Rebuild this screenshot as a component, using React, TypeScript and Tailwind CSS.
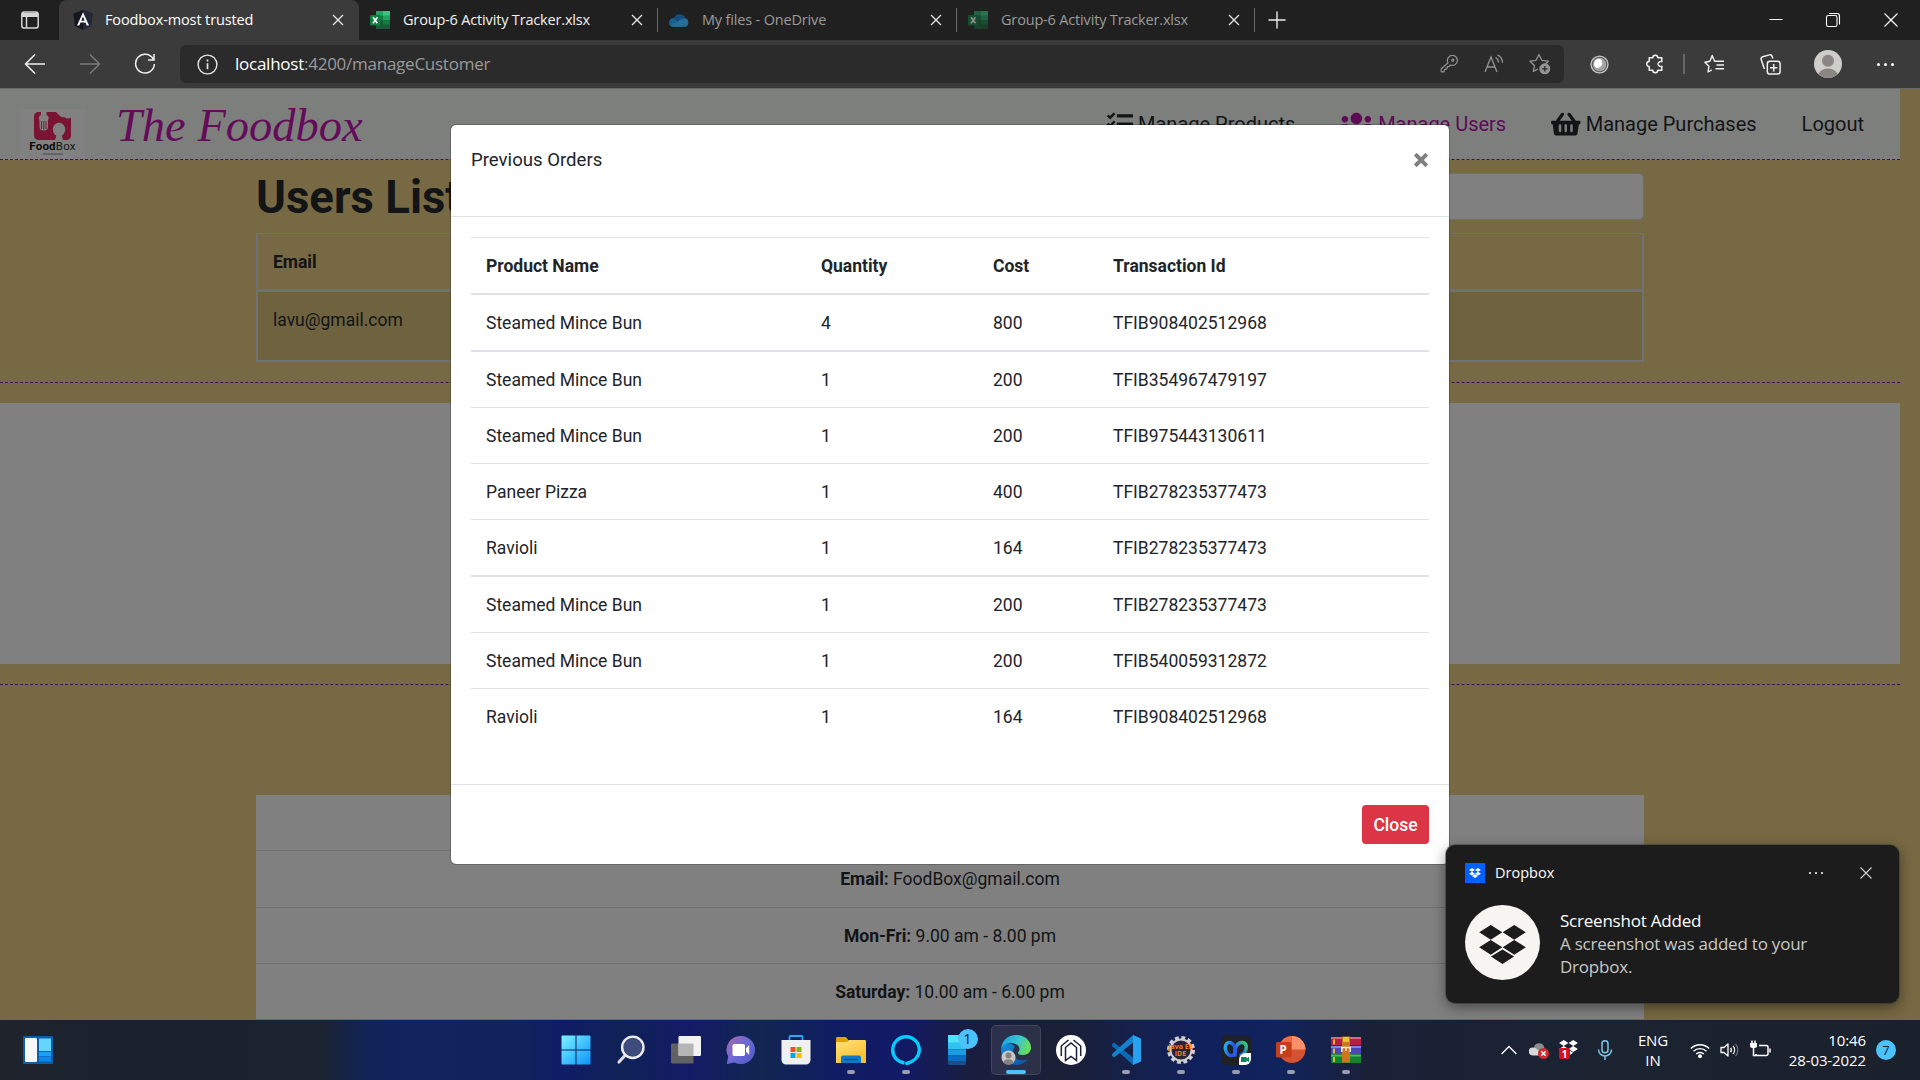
import type { ReactNode } from "react";
import { FaShoppingBasket, FaTasks, FaUsers } from "react-icons/fa";

type Order = { name: string; qty: number; cost: number; id: string; row: string };

const orders: Order[] = [
  { name: "Steamed Mince Bun", qty: 4, cost: 800, id: "TFIB908402512968", row: "h-[57px] border-b-2" },
  { name: "Steamed Mince Bun", qty: 1, cost: 200, id: "TFIB354967479197", row: "h-14 border-b" },
  { name: "Steamed Mince Bun", qty: 1, cost: 200, id: "TFIB975443130611", row: "h-14 border-b" },
  { name: "Paneer Pizza", qty: 1, cost: 400, id: "TFIB278235377473", row: "h-14 border-b" },
  { name: "Ravioli", qty: 1, cost: 164, id: "TFIB278235377473", row: "h-[57px] border-b-2" },
  { name: "Steamed Mince Bun", qty: 1, cost: 200, id: "TFIB278235377473", row: "h-14 border-b" },
  { name: "Steamed Mince Bun", qty: 1, cost: 200, id: "TFIB540059312872", row: "h-14 border-b" },
  { name: "Ravioli", qty: 1, cost: 164, id: "TFIB908402512968", row: "h-[55px]" },
];

const orderCols = "grid grid-cols-[335px_172px_120px_1fr] items-center pt-0.5";

/* ---------- browser chrome ---------- */

function TabClose() {
  return (
    <svg className="size-[14px] shrink-0 text-[#e8e8e8]" viewBox="0 0 14 14" fill="none" stroke="currentColor" strokeWidth="1.3">
      <path d="M2 2l10 10M12 2L2 12" />
    </svg>
  );
}

function AngularIcon() {
  return (
    <svg className="size-5 shrink-0" viewBox="0 0 20 20">
      <path d="M10 0l9.5 3.4-1.4 12.4L10 20l-8.1-4.2L.5 3.4z" fill="#14161f" />
      <path d="M10 0v20l8.1-4.2L19.5 3.4z" fill="#232738" />
      <path d="M10 2.2L4 15.6h2.3l1.2-3h5l1.2 3H16zm0 4.3l1.7 4.2H8.3z" fill="#fff" />
    </svg>
  );
}

function ExcelIcon({ dim = false }: { dim?: boolean }) {
  return (
    <svg className={dim ? "size-5 shrink-0 opacity-50" : "size-5 shrink-0"} viewBox="0 0 20 20">
      <path d="M6 1h14v18H6z" fill="#21a366" />
      <path d="M13 1h7v4.5h-7z" fill="#33c481" />
      <path d="M6 5.5h7V10H6z" fill="#107c41" />
      <path d="M6 10h14v9H6z" fill="#185c37" />
      <path d="M13 10h7v4.5h-7z" fill="#107c41" />
      <rect y="5" width="10.5" height="10.5" rx="1" fill="#107c41" />
      <path d="M3 7.2l4.4 6M7.4 7.2L3 13.2" stroke="#fff" strokeWidth="1.6" />
    </svg>
  );
}

function OneDriveIcon() {
  return (
    <svg className="size-5 shrink-0" viewBox="0 0 20 20">
      <path d="M5 8.2A6 6 0 0 1 16 7.5l-6 4.5z" fill="#14507f" />
      <path d="M0 12.6A4.6 4.6 0 0 1 5 8l9 8.8H4A4.2 4.2 0 0 1 0 12.6z" fill="#1a6092" />
      <path d="M15.5 8a4.5 4.5 0 0 1 .5 8.8H4a4 4 0 0 1-2.6-1.2L12 9.5z" fill="#256f98" />
    </svg>
  );
}

function Tab({ width, icon, title, dim }: { width: string; icon: ReactNode; title: string; dim?: boolean }) {
  return (
    <div className={`flex h-full items-center pr-[13px] pl-[11px] ${width}`}>
      {icon}
      <span className={`ml-[13px] flex-1 text-[14.5px] tracking-[-0.17px] whitespace-nowrap ${dim ? "text-[#9b9b9b]" : "text-[#f2f2f2]"}`}>{title}</span>
      <TabClose />
    </div>
  );
}

function TabBar() {
  return (
    <div className="flex h-10 items-center bg-[#202020]">
      <div className="flex h-full w-[59px] items-center justify-center">
        <svg className="size-5" viewBox="0 0 20 20" fill="none" stroke="#d6d6d6" strokeWidth="1.5">
          <rect x="1.8" y="2" width="16.4" height="16" rx="2.6" />
          <path d="M2 5h16" strokeWidth="4" />
          <path d="M6.5 6v12" />
        </svg>
      </div>
      <div className="flex h-full w-[300px] items-center rounded-t-lg bg-[#3b3b3b] pr-[14px] pl-[14px]">
        <AngularIcon />
        <span className="ml-3 flex-1 text-[14.5px] tracking-[-0.12px] text-white">Foodbox-most trusted</span>
        <TabClose />
      </div>
      <Tab width="w-[298px]" icon={<ExcelIcon />} title="Group-6 Activity Tracker.xlsx" />
      <div className="h-6 w-px bg-[#6b6b6b]" />
      <Tab width="w-[298px]" icon={<OneDriveIcon />} title="My files - OneDrive" dim />
      <div className="h-6 w-px bg-[#6b6b6b]" />
      <Tab width="w-[297px]" icon={<ExcelIcon dim />} title="Group-6 Activity Tracker.xlsx" dim />
      <div className="h-6 w-px bg-[#6b6b6b]" />
      <svg className="ml-[13px] size-[18px]" viewBox="0 0 18 18" stroke="#ededed" strokeWidth="1.4">
        <path d="M9 .5v17M.5 9h17" />
      </svg>
      <div className="ml-auto flex">
        <div className="flex w-[57px] justify-center">
          <svg className="size-4" viewBox="0 0 16 16" stroke="#fff"><path d="M1.5 7.5h13" /></svg>
        </div>
        <div className="flex w-[58px] justify-center">
          <svg className="size-4" viewBox="0 0 16 16" fill="none" stroke="#fff" strokeWidth="1.1">
            <rect x="1.5" y="3.5" width="10.5" height="11" rx="1.8" />
            <path d="M4 1.5h8a2.5 2.5 0 0 1 2.5 2.5v8.5" />
          </svg>
        </div>
        <div className="flex w-[58px] justify-center">
          <svg className="size-4" viewBox="0 0 16 16" stroke="#fff" strokeWidth="1.2"><path d="M1.5 1.5l13 13M14.5 1.5l-13 13" /></svg>
        </div>
      </div>
    </div>
  );
}

function ToolBar() {
  return (
    <div className="flex h-[49px] items-center border-b border-[#6a6a6a] bg-[#3b3b3b]">
      <div className="flex w-[180px] justify-between pr-[24px] pl-[24px]">
        <svg className="size-[22px]" viewBox="0 0 22 22" fill="none" stroke="#f0f0f0" strokeWidth="1.5"><path d="M21 11H2M11 1.5L1.5 11l9.5 9.5" /></svg>
        <svg className="size-[22px]" viewBox="0 0 22 22" fill="none" stroke="#7b7b7b" strokeWidth="1.5"><path d="M1 11h19M11 1.5l9.5 9.5-9.5 9.5" /></svg>
        <svg className="size-[22px]" viewBox="0 0 22 22" fill="none" stroke="#f0f0f0" strokeWidth="1.5">
          <path d="M19.3 6.2A9.4 9.4 0 1 0 20.4 11M20 1v6h-6" />
        </svg>
      </div>
      <div className="flex h-[38px] w-[1384px] items-center rounded-md bg-[#2b2b2b] pr-[13px] pl-[17px]">
        <svg className="size-[21px]" viewBox="0 0 21 21" fill="none" stroke="#e6e6e6" strokeWidth="1.4">
          <circle cx="10.5" cy="10.5" r="9.4" />
          <path d="M10.5 9.2v6M10.5 5.6v2" strokeWidth="1.7" />
        </svg>
        <div className="ml-[17px] flex-1 text-[17px] tracking-[-0.25px] text-[#9a9a9a]">
          <span className="text-white">localhost</span>:4200/manageCustomer
        </div>
        <svg className="size-[18px]" viewBox="0 0 18 18" fill="none" stroke="#949494" strokeWidth="1.2">
          <path d="M8 7.7A5 5 0 1 1 10.500 10L9 11.500H7.500V13H6v1.500H4.600L4 16.800H1.200V14z" strokeLinejoin="round" />
          <circle cx="12.8" cy="5.2" r="1" />
        </svg>
        <svg className="ml-[26px] size-5" viewBox="0 0 20 20" fill="none" stroke="#949494" strokeWidth="1.3">
          <path d="M1 18L7 3l6 15M3.2 13h7.6" />
          <path d="M11.5 3.5a6 6 0 0 1 3 5M13.5.8a9 9 0 0 1 5 8" />
        </svg>
        <svg className="ml-[25px] size-[22px]" viewBox="0 0 22 22" fill="none" stroke="#949494" strokeWidth="1.3" strokeLinejoin="round">
          <path d="M9 16l-4.6 2.5 1-6L1 8.2l6-.9L10 1.500l2.8 5.800 6.500.900-3 3" />
          <circle cx="15.8" cy="15.8" r="5.5" fill="#949494" stroke="none" />
          <path d="M15.8 13v5.6M13 15.8h5.6" stroke="#2b2b2b" />
        </svg>
      </div>
      <div className="ml-[7px] flex w-14 justify-center">
        <svg className="size-[19px]" viewBox="0 0 20 20">
          <circle cx="10" cy="10" r="9.6" fill="#c4c4c4" />
          <circle cx="10" cy="10" r="8.2" fill="#5c5c5c" />
          <circle cx="10" cy="10" r="7" fill="#a4a4a4" />
          <ellipse cx="8.600" cy="8.800" rx="4.200" ry="5" fill="#fff" transform="rotate(25 8.6 8.8)" />
        </svg>
      </div>
      <div className="flex w-14 justify-center">
        <svg className="size-5" viewBox="0 0 20 20" fill="none" stroke="#f0f0f0" strokeWidth="1.5" strokeLinejoin="round">
          <path d="M4.2 3.8h3.600a2.500 2.500 0 1 1 5 0h4v4a2.500 2.500 0 1 0 0 4.400v4h-4a2.500 2.500 0 1 1-5 0H4.200v-3.700a2.500 2.500 0 1 1 0-5z" />
        </svg>
      </div>
      <div className="h-5 w-0.5 bg-[#686868]" />
      <div className="flex w-[58px] justify-center">
        <svg className="size-5" viewBox="0 0 20 20" fill="none" stroke="#f0f0f0" strokeWidth="1.4" strokeLinejoin="round">
          <path d="M7.8 15.8l-3.8 2.2.9-5.7L.9 8.2l5-.9L8.200 1.500l2.400 5.800H20M12.500 11H20M11.500 14.800H20" />
        </svg>
      </div>
      <div className="flex w-[55px] justify-center">
        <svg className="size-[21px]" viewBox="0 0 21 21" fill="none" stroke="#f0f0f0" strokeWidth="1.5">
          <rect x="7.3" y="7.3" width="12.8" height="12.8" rx="2.6" />
          <path d="M13.7 10v7.4M10 13.7h7.4M4.4 15L1.2 5.6a2.300 2.300 0 0 1 1.500-2.800L9.400.9a2.300 2.300 0 0 1 2.800 1.600l.6 2" />
        </svg>
      </div>
      <div className="flex w-[59px] justify-center">
        <div className="flex size-7 justify-center overflow-hidden rounded-full bg-[#cfcdca]">
          <svg viewBox="0 0 28 28" fill="#8b8683"><circle cx="14" cy="10.7" r="6" /><ellipse cx="14" cy="26" rx="10" ry="7.5" /></svg>
        </div>
      </div>
      <div className="flex w-[56px] justify-center gap-1">
        <i className="size-[3px] rounded-full bg-white" />
        <i className="size-[3px] rounded-full bg-white" />
        <i className="size-[3px] rounded-full bg-white" />
      </div>
    </div>
  );
}

/* ---------- page ---------- */

function FoodboxLogo() {
  return (
    <div className="flex h-[50px] w-[65px] flex-col items-center bg-[#818181] pt-[3px]">
      <svg className="h-7 w-[37px] shrink-0" viewBox="0 0 37 28">
        <rect width="37" height="28" rx="4.5" fill="#7a1433" />
        <g fill="#818181">
          <path d="M22 0h15v5.500c-2.500 1.800-5 1-7-.5-3 1-5-2-8-5z" />
          <path d="M7 0h5.500v3c2.500 1 2.500 3 1.500 5.500v6c0 3-1.500 4-4.200 4S5.500 17.500 5.500 14.500v-6C4.500 6 4.500 4 7 3z" />
          <ellipse cx="25" cy="17.500" rx="6.200" ry="6.700" />
          <path d="M22.800 22h4.600l1.600 6h-8z" />
        </g>
        <path d="M7.600 9v8M9.800 9v8.500M12 9v8" stroke="#7a1433" strokeWidth=".9" />
      </svg>
      <div className="text-[11.5px] leading-[13px] tracking-[0.2px] text-[#151515]"><b className="text-[#0c0c0c]">Food</b>Box</div>
      <div className="h-[2px] w-5 bg-[#646464]" />
    </div>
  );
}

function NavBar() {
  return (
    <header className="flex h-[71px] items-center border-b border-dashed border-[#400e60] bg-[#7d7f7d] pr-[36px] pl-5 text-xl text-[#121416]">
      <div className="flex h-full items-end"><FoodboxLogo /></div>
      <div className="mt-[5px] ml-[31px] font-['Liberation_Serif',serif] text-[46.5px] leading-none text-[#640c5a] italic">The Foodbox</div>
      <nav className="ml-auto flex items-center gap-[45px]">
        <a className="flex items-center gap-[5px]"><FaTasks className="text-[26.25px]" />Manage Products</a>
        <a className="flex items-center gap-[5px] text-[#5e0a55]"><FaUsers className="h-[26.25px] w-[32.8px]" />Manage Users</a>
        <a className="flex items-center gap-[5px]"><FaShoppingBasket className="h-[26.25px] w-[29.5px]" />Manage Purchases</a>
        <a>Logout</a>
      </nav>
    </header>
  );
}

function Page() {
  return (
    <main className="h-[931px] overflow-hidden bg-[#776943] pr-5 text-[#121416]">
      <NavBar />
      <section className="h-[223px] border-b border-dashed border-[#400e60] px-64">
        <div className="flex h-[73px] items-start justify-between">
          <h1 className="mt-[10px] text-[45.5px] leading-[56px] font-bold">Users List</h1>
          <div className="mt-[13px] h-[47px] w-[400px] rounded-[5px] border border-[#6b7074] bg-[#808080]" />
        </div>
        <div className="h-[129px] border-2 border-t border-[#6f7173]">
          <div className="flex h-[58px] items-center border-b-3 border-[#6f7173] pt-0.5 pl-[15px] font-bold">Email</div>
          <div className="h-[68px] bg-[#6f623f] pt-[15px] pl-[15px] leading-[26px]">lavu@gmail.com</div>
        </div>
      </section>
      <div className="mt-5 h-[261px] bg-[#808080]" />
      <div className="h-[21px] border-b border-dashed border-[#400e60]" />
      <section className="mx-64 mt-[110px] bg-[#808080] text-center">
        <div className="h-14 border-b border-[#707070]" />
        <div className="h-[57px] border-b border-[#707070] leading-[56px]"><b>Email:</b> FoodBox@gmail.com</div>
        <div className="h-14 border-b border-[#707070] leading-[56px]"><b>Mon-Fri:</b> 9.00 am - 8.00 pm</div>
        <div className="h-[55px] leading-[56px]"><b>Saturday:</b> 10.00 am - 6.00 pm</div>
      </section>
    </main>
  );
}

function OrdersDialog() {
  return (
    <div className="absolute top-[124px] left-[450px] flex h-[741px] w-[1000px] flex-col rounded-md border border-black/20 bg-white bg-clip-padding text-[#212529]">
      <div className="flex h-[92px] items-start justify-between border-b border-[#dee2e6] px-5 pt-[21px]">
        <h5 className="text-[18.6px] leading-7">Previous Orders</h5>
        <svg className="mt-[7px] mr-[1px] size-[14px]" viewBox="0 0 14 14" stroke="#7f7f7f" strokeWidth="4"><path d="M1.2 1.2l11.6 11.6M12.8 1.2L1.2 12.8" /></svg>
      </div>
      <div className="flex-1 px-5 pt-5">
        <div className={`h-[58px] border-t border-b-2 border-[#dee2e6] font-bold *:pl-[15px] ${orderCols}`}>
          <span>Product Name</span><span>Quantity</span><span>Cost</span><span>Transaction Id</span>
        </div>
        {orders.map((o, i) => (
          <div key={i} className={`border-[#dee2e6] *:pl-[15px] ${orderCols} ${o.row}`}>
            <span>{o.name}</span><span>{o.qty}</span><span>{o.cost}</span><span>{o.id}</span>
          </div>
        ))}
      </div>
      <div className="flex h-20 items-start justify-end border-t border-[#dee2e6] px-5 pt-5">
        <button className="h-[39px] w-[67px] rounded bg-[#dc3545] pt-0.5 font-medium text-white">Close</button>
      </div>
    </div>
  );
}

/* ---------- notification ---------- */

function DropboxGlyph({ className, fill }: { className: string; fill: string }) {
  return (
    <svg className={className} viewBox="0 0 48 40" fill={fill}>
      <path d="M12 0l11.8 7.5L12 15 .2 7.5zM36 0l11.8 7.5L36 15 24.2 7.5zM12 15.3l11.8 7.5L12 30.3.2 22.8zM36 15.3l11.8 7.5L36 30.3l-11.8-7.5zM24 25l11.8 7.3L24 39.8l-11.8-7.5z" />
    </svg>
  );
}

function Toast() {
  return (
    <div className="absolute top-[845px] left-[1446px] h-[158px] w-[453px] rounded-[9px] bg-[#1c1c1c] px-[19px] pt-[18px] font-['Open_Sans',sans-serif] shadow-[0_4px_14px_rgba(0,0,0,0.45),0_0_0_1px_rgba(70,70,70,0.5)]">
      <div className="flex h-5 items-center">
        <div className="flex size-5 items-center justify-center bg-[#0061fe]"><DropboxGlyph className="w-3" fill="#fff" /></div>
        <span className="ml-[10px] flex-1 text-[14.5px] text-white">Dropbox</span>
        <div className="flex gap-1">
          <i className="size-[2px] bg-[#c8c8c8]" /><i className="size-[2px] bg-[#c8c8c8]" /><i className="size-[2px] bg-[#c8c8c8]" />
        </div>
        <svg className="mr-[8px] ml-[37px] size-3" viewBox="0 0 12 12" stroke="#d0d0d0" strokeWidth="1.1"><path d="M.5.5l11 11M11.5.5l-11 11" /></svg>
      </div>
      <div className="mt-[22px] flex">
        <div className="flex size-[75px] items-center justify-center rounded-full bg-[#f7f5f2]"><DropboxGlyph className="mt-1 w-[47px]" fill="#1c1c1c" /></div>
        <div className="ml-5 pt-1 text-[17px] leading-[23px] tracking-[-0.22px] text-[#c8c8c8]">
          <div className="text-white">Screenshot Added</div>
          <div>A screenshot was added to your<br />Dropbox.</div>
        </div>
      </div>
    </div>
  );
}

/* ---------- taskbar ---------- */

function TaskItem({ children, state }: { children: ReactNode; state?: "open" | "active" }) {
  return (
    <div className="relative flex h-[60px] w-[55px] items-center justify-center">
      {state === "active" && <div className="absolute top-[5px] left-[3px] h-[50px] w-[50px] rounded-[5px] border border-white/10 bg-white/8" />}
      <div className="relative size-[30px]">{children}</div>
      {state === "active" && <div className="absolute bottom-[6px] left-[18px] h-1 w-5 rounded-full bg-[#4cc2ff]" />}
      {state === "open" && <div className="absolute bottom-[6px] left-[24px] h-1 w-2 rounded-full bg-[#9a9db0]" />}
    </div>
  );
}

function TaskIcons() {
  return (
    <div className="flex">
      <TaskItem>
        <svg viewBox="0 0 30 30">
          <defs><linearGradient id="win" gradientUnits="userSpaceOnUse" x1="0" y1="0" x2="30" y2="30"><stop stopColor="#7df4ff" /><stop offset="1" stopColor="#0a93ff" /></linearGradient></defs>
          <path d="M.5 1.5A1 1 0 0 1 1.5.5h13v14H.5zM15.5.5h13a1 1 0 0 1 1 1v13h-14zM.5 15.5h14v14h-13a1 1 0 0 1-1-1zM15.5 15.5h14v13a1 1 0 0 1-1 1h-13z" fill="url(#win)" />
        </svg>
      </TaskItem>
      <TaskItem>
        <svg viewBox="0 0 30 30">
          <path d="M9 20.500L3 27" stroke="#dcdcdc" strokeWidth="3.2" strokeLinecap="round" />
          <circle cx="16.8" cy="12.3" r="10.7" fill="#3f4a7d" stroke="#ececec" strokeWidth="2.4" />
        </svg>
      </TaskItem>
      <TaskItem>
        <svg viewBox="0 0 30 30">
          <rect x="0" y="8.5" width="22.5" height="20" rx="1.2" fill="#616161" />
          <rect x="7.5" y="1" width="22.5" height="20" rx="1.2" fill="#f2f2f2" />
          <path d="M7.5 8.5h15V21H8.7a1.2 1.2 0 0 1-1.2-1.2z" fill="#b5b5b5" />
        </svg>
      </TaskItem>
      <TaskItem>
        <svg viewBox="0 0 30 30">
          <defs><linearGradient id="chat" x1="0" y1="0" x2="1" y2=".9"><stop stopColor="#b067a0" /><stop offset=".5" stopColor="#6a6ad8" /><stop offset="1" stopColor="#5558c8" /></linearGradient></defs>
          <path d="M15 1a14 14 0 1 1-6.5 26.4L.8 29l1.4-7.4A14 14 0 0 1 15 1z" fill="url(#chat)" />
          <rect x="6.5" y="9" width="12.5" height="12" rx="1.8" fill="#fff" />
          <path d="M20 13.2l3.2-3v9.6l-3.2-3z" fill="#fff" />
        </svg>
      </TaskItem>
      <TaskItem>
        <svg viewBox="0 0 30 30">
          <path d="M8.5 6V2a1 1 0 0 1 1-1h11a1 1 0 0 1 1 1v4" fill="none" stroke="#2ba8f5" strokeWidth="1.8" />
          <path d="M.5 5h29v20a4.5 4.5 0 0 1-4.5 4.5H5A4.5 4.5 0 0 1 .5 25z" fill="#f0f0f0" />
          <path d="M9.5 12h5v5h-5z" fill="#f25022" /><path d="M15.5 12h5v5h-5z" fill="#7fba00" />
          <path d="M9.5 18h5v5h-5z" fill="#00a4ef" /><path d="M15.5 18h5v5h-5z" fill="#ffb900" />
        </svg>
      </TaskItem>
      <TaskItem state="open">
        <svg viewBox="0 0 30 30">
          <defs><linearGradient id="fold" x1="0" y1="0" x2="0.6" y2="1"><stop stopColor="#ffe27a" /><stop offset="1" stopColor="#fcbf2c" /></linearGradient></defs>
          <path d="M0 3.2A1.2 1.2 0 0 1 1.2 2h8.6l3 3.5V10H0z" fill="#e0a008" />
          <path d="M0 7h11l2-2h15.8A1.2 1.2 0 0 1 30 6.2V28H0z" fill="url(#fold)" />
          <path d="M5 28v-5.500A2 2 0 0 1 7 20.500h16a2 2 0 0 1 2 2V28z" fill="#0f78cc" />
          <path d="M8.500 24.500h13" stroke="#0a4f94" strokeWidth="1.400" />
        </svg>
      </TaskItem>
      <TaskItem state="open">
        <svg viewBox="0 0 30 30">
          <path d="M13.500 28C6.500 27 1.700 21.500 1.700 15a13.300 13.300 0 1 1 26.600 0c0 7-6 12-14 14" fill="none" stroke="#05ccff" strokeWidth="3.400" />
        </svg>
      </TaskItem>
      <TaskItem>
        <svg viewBox="0 0 30 30">
          <path d="M2 0h18v8H2z" fill="#4fe3fa" />
          <path d="M2 7.500h18v7H2z" fill="#31c0f2" /><path d="M2 14.500h18v6H2z" fill="#1b9de6" />
          <path d="M2 20.500h18V26H2z" fill="#0a6cc4" /><path d="M2 26h18v2.500a1.500 1.500 0 0 1-1.500 1.500h-15A1.500 1.500 0 0 1 2 28.500z" fill="#174f8a" />
        </svg>
        <div className="absolute -top-[6px] left-[12px] flex size-5 items-center justify-center rounded-full bg-[#4cc2ff] font-['Open_Sans',sans-serif] text-[14.5px] text-[#10202c]">1</div>
      </TaskItem>
      <TaskItem state="active">
        <svg viewBox="0 0 30 30">
          <defs>
            <linearGradient id="edgeTop" x1="0" y1=".3" x2="1" y2=".6"><stop stopColor="#1f9fe6" /><stop offset=".5" stopColor="#33c6d2" /><stop offset="1" stopColor="#6ee04e" /></linearGradient>
            <linearGradient id="edgeLow" x1="0" y1="0" x2="1" y2="1"><stop stopColor="#1590e0" /><stop offset="1" stopColor="#0c4f9d" /></linearGradient>
          </defs>
          <path d="M0 15a15 15 0 0 0 15 15c5 0 9-2 12-6-6 3-14 1-15-6-.5-3 1-5.500 2-6C10 6 1 8 0 15z" fill="url(#edgeLow)" />
          <path d="M0 14C1 5 7 0 15 0c9 0 15 6 15 12.500 0 5-4 7.500-8.500 7.500-3 0-4.500-1-4.500-2s1.500-1.500 1.500-4C18.500 7 5 5 0 14z" fill="url(#edgeTop)" />
          <circle cx="7.500" cy="22.500" r="7" fill="#c9c7c4" /><circle cx="7.500" cy="20.500" r="3" fill="#86817e" /><ellipse cx="7.500" cy="27" rx="4.600" ry="2.700" fill="#86817e" />
        </svg>
      </TaskItem>
      <TaskItem>
        <svg viewBox="0 0 30 30" fill="none" stroke="#1b2039">
          <circle cx="15" cy="15" r="15" fill="#fff" stroke="none" />
          <path d="M9.500 25.500V12.500L15 8l5.500 4.500v13L15 21.500z" strokeWidth="1.500" />
          <path d="M5.300 21V11L12.500 5M24.700 21V11L17.500 5" strokeWidth="1.500" />
        </svg>
      </TaskItem>
      <TaskItem state="open">
        <svg viewBox="0 0 30 30">
          <path d="M1 9.200l2-1.700L24 24l-2 6-20.700-18.800z" fill="#0b69b0" />
          <path d="M1 20.800l2 1.700L24 6l-2-6L1.300 18.800z" fill="#1182cf" />
          <path d="M22 0l7 3a1.500 1.500 0 0 1 1 1.400v21.200A1.500 1.500 0 0 1 29 27l-7 3z" fill="#26a2f0" />
        </svg>
      </TaskItem>
      <TaskItem state="open">
        <svg viewBox="0 0 30 30">
          <circle cx="15" cy="15" r="12.300" fill="none" stroke="#cfcfcf" strokeWidth="3.400" strokeDasharray="3.860 2.580" />
          <circle cx="15" cy="15" r="10.500" fill="#2a2333" stroke="#cfcfcf" strokeWidth="2" />
        </svg>
        <div className="absolute inset-x-[-4px] top-[8px] text-center text-[7px] leading-[7px] font-bold text-[#f08010]">Java EE<br />IDE</div>
      </TaskItem>
      <TaskItem state="open">
        <svg viewBox="0 0 30 30">
          <defs>
            <linearGradient id="wbxL" x1="0" y1="0" x2="1" y2="1"><stop stopColor="#22c0e8" /><stop offset=".6" stopColor="#2a56e8" /></linearGradient>
            <linearGradient id="wbxR" x1="1" y1="0" x2="0" y2="1"><stop stopColor="#3bd16a" /><stop offset=".7" stopColor="#2460f0" /></linearGradient>
          </defs>
          <rect width="30" height="30" rx="6" fill="#202124" />
          <ellipse cx="9.300" cy="14" rx="4.800" ry="6.800" transform="rotate(-18 9.300 14)" fill="none" stroke="url(#wbxL)" strokeWidth="3.400" />
          <path d="M14 20c-1-6 1.500-12 6.500-12.500C24 7.200 26 10 25 14c-.6 3-2.500 5-5 6" fill="none" stroke="url(#wbxR)" strokeWidth="3.600" strokeLinecap="round" />
          <path d="M18 24.500a6.500 6.500 0 0 1 6.500-6.500H30v6a6 6 0 0 1-6 6h-6z" fill="#fff" />
          <path d="M20 22h5.500v1.500L28 22v5l-2.500-1.500V27H20z" fill="#12805c" />
        </svg>
      </TaskItem>
      <TaskItem state="open">
        <svg viewBox="0 0 30 30">
          <circle cx="16" cy="14.500" r="13.500" fill="#d35230" />
          <path d="M16 1a13.500 13.500 0 0 1 13.500 13.500H16z" fill="#ff8f6b" /><path d="M16 1a13.500 13.500 0 0 0-13.500 13.500H16z" fill="#ed6c47" />
          <rect y="7" width="15.500" height="15.500" rx="1.300" fill="#c43e1c" />
        </svg>
        <b className="absolute top-[7px] left-0 w-[15px] text-center font-['Open_Sans',sans-serif] text-[11.5px] leading-[15px] text-white">P</b>
      </TaskItem>
      <TaskItem state="open">
        <svg viewBox="0 0 30 30">
          <path d="M0 2h30v8.500H0z" fill="#b51f47" /><path d="M0 11h30v8H0z" fill="#4a48b8" /><path d="M0 19.500h30V28H0z" fill="#13832f" />
          <path d="M0 2h30v2H0z" fill="#e8607f" /><path d="M0 11h30v2H0z" fill="#8583e0" /><path d="M0 19.500h30v2H0z" fill="#3fc25c" />
          <path d="M3 4.500v5M3 13.500v5M3 22v5" stroke="#f0c030" strokeWidth="1.800" />
          <path d="M11 1.500h8v26h-8z" fill="#c9781c" /><path d="M12 2h6v5h-6z" fill="#e9c332" />
          <path d="M10.800 17v-4.500h8.400V17" fill="none" stroke="#efefef" strokeWidth="1.500" /><path d="M15 12v4" stroke="#efefef" strokeWidth="1.200" />
        </svg>
      </TaskItem>
    </div>
  );
}

function Tray() {
  return (
    <div className="ml-auto flex h-full items-center text-[15px] leading-5 tracking-[-0.1px] text-white">
      <svg className="w-4" viewBox="0 0 16 10" fill="none" stroke="#fff" strokeWidth="1.300"><path d="M.6 9L8 1.500 15.400 9" /></svg>
      <svg className="ml-[12px] h-[18px] w-5" viewBox="0 0 20 18">
        <path d="M5 6.500a5.200 5.200 0 0 1 10.200 0L18 12l-9 2z" fill="#8e8e8e" /><path d="M3.500 14.500A4 4 0 0 1 4 6.500c3 0 4 1.500 5.500 3l4 5z" fill="#d8d8d8" />
        <circle cx="14.500" cy="12.500" r="5.500" fill="#dc2430" /><path d="M12.300 10.300l4.400 4.400M16.700 10.300l-4.400 4.400" stroke="#fff" strokeWidth="1.500" />
      </svg>
      <div className="relative ml-[10px] h-5 w-5">
        <DropboxGlyph className="w-[19px]" fill="#fff" />
        <div className="absolute top-[8px] left-0 flex h-[11px] w-[11px] items-center justify-center rounded-[2px] bg-[#d5101e] text-[10px] font-bold">1</div>
      </div>
      <svg className="ml-[18px] h-5 w-4" viewBox="0 0 16 20" fill="none" stroke="#7fc6e6" strokeWidth="1.500">
        <rect x="5" y=".8" width="6" height="12" rx="3" /><path d="M1.500 9.500a6.500 6.500 0 0 0 13 0M8 16v4" />
      </svg>
      <div className="ml-[22px] w-[36px] text-center">ENG<br />IN</div>
      <svg className="ml-[19px] h-5 w-5" viewBox="0 0 20 20" fill="none" stroke="#fff" strokeWidth="1.400">
        <path d="M.8 8.500a13 13 0 0 1 18.400 0M3.500 11.300a9.200 9.200 0 0 1 13 0M6.200 14a5.400 5.400 0 0 1 7.600 0" /><circle cx="10" cy="16.300" r="1.300" fill="#fff" />
      </svg>
      <svg className="ml-[10px] h-5 w-5" viewBox="0 0 20 20" fill="none" stroke="#fff" strokeWidth="1.300" strokeLinejoin="round">
        <path d="M1 7.500h3L8 4v12l-4-3.500H1zM10.500 7.800a3.500 3.500 0 0 1 0 4.400M13 5.800a6.500 6.500 0 0 1 0 8.400" /><path d="M15.500 3.800a9.500 9.500 0 0 1 0 12.400" stroke="#676b76" />
      </svg>
      <svg className="ml-[10px] h-5 w-[21px]" viewBox="0 0 21 20" fill="none" stroke="#fff" strokeWidth="1.500">
        <path d="M9 5.500h7.500A1.500 1.500 0 0 1 18 7v7a1.500 1.500 0 0 1-1.500 1.500H7.500A1.500 1.500 0 0 1 6 14M20 8.500v4M2 .5v3M5 .5v3M3.500 8v7.500h4" /><path d="M0 3h7v2.500A2.500 2.500 0 0 1 4.500 8h-2A2.500 2.500 0 0 1 0 5.500z" fill="#fff" stroke="none" />
      </svg>
      <div className="w-[95px] text-right">10:46<br />28-03-2022</div>
      <div className="mr-[24px] ml-[10px] flex size-5 items-center justify-center rounded-full bg-[#4cc2ff] text-[13px] text-[#10202c]">7</div>
    </div>
  );
}

function TaskBar() {
  return (
    <footer className="flex h-[60px] items-center bg-[linear-gradient(90deg,#1f232c_0px,#1a222e_120px,#1b2230_320px,#11245a_370px,#11235c_520px,#101c66_560px,#0f2156_620px,#131b66_690px,#122650_760px,#101d62_830px,#121a66_900px,#191e40_970px,#1b2036_1060px,#10205c_1200px,#10235c_1280px,#1a2036_1370px,#1b2135_1440px,#1b2331_1600px,#1b212c_1920px)] font-['Open_Sans',sans-serif]">
      <svg className="ml-[23px] h-7 w-[30px]" viewBox="0 0 30 28">
        <rect width="30" height="28" rx="1" fill="#0d5eaa" /><rect x="2" y="2" width="12" height="24" rx="1" fill="#f7f7f7" />
        <path d="M16 2.500h12V15H16z" fill="#67d6ff" /><path d="M16 15.800h12v4.500H16z" fill="#1aa0f5" /><path d="M16 21h12v4.500H16z" fill="#0b87ee" />
      </svg>
      <div className="ml-[495px]"><TaskIcons /></div>
      <Tray />
    </footer>
  );
}

export default function App() {
  return (
    <div className="relative h-[1080px] w-[1920px] overflow-hidden font-[Roboto,sans-serif] text-[17.5px]">
      <div className="font-['Open_Sans',sans-serif]">
        <TabBar />
        <ToolBar />
      </div>
      <Page />
      <TaskBar />
      <OrdersDialog />
      <Toast />
    </div>
  );
}
